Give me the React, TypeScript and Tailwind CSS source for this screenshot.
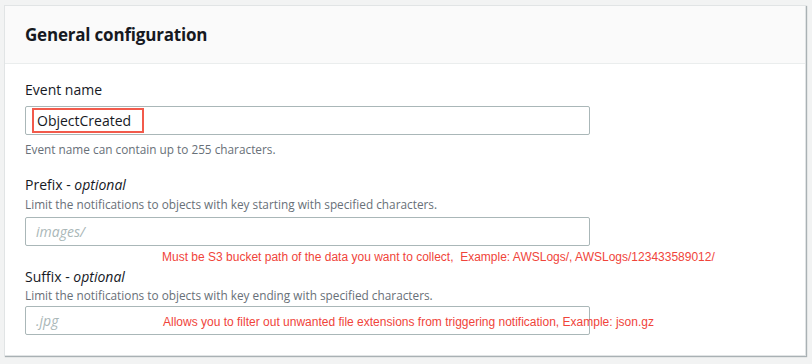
import React from "react";

const ui = { fontFamily: '"Open Sans", "Noto Sans", sans-serif' };
const red = { fontFamily: '"Liberation Sans", Arial, sans-serif' };

export default function App() {
  return (
    <div className="w-[812px] h-[364px] bg-[#f2f3f3] pt-[5px] pl-[4px] pr-[6px]" style={ui}>
      <div className="w-[802px] h-[351px] bg-white border border-[#e1e4e5] shadow-[1px_1px_1px_0_rgba(0,28,36,0.3)] flex flex-col">
        <div className="h-[58px] bg-[#fafafa] border-b border-[#eaeded] flex items-center px-[20px]">
          <h2 className="text-[17px] font-bold text-[#16191f] leading-none tracking-[-0.2px]">General configuration</h2>
        </div>
        <div className="px-[20px] pt-[15px] flex flex-col">
          <label className="text-[14px] text-[#16191f] leading-[22px]">Event name</label>
          <div className="mt-[5px] w-[565px] h-[29px] border border-[#aab7b8] rounded-[2px] flex items-center pl-[6px]">
            <div className="h-[25px] border-2 border-[#f25a4b] flex items-center pl-[3px] pr-[11px]">
              <span className="text-[14px] text-[#16191f]">ObjectCreated</span>
            </div>
          </div>
          <p className="mt-[6px] text-[11.8px] text-[#687078] leading-[16px]">Event name can contain up to 255 characters.</p>

          <label className="mt-[17px] text-[14px] text-[#16191f] leading-[22px]">
            Prefix - <i>optional</i>
          </label>
          <p className="text-[11.8px] text-[#687078] leading-[16px]">Limit the notifications to objects with key starting with specified characters.</p>
          <div className="mt-[5px] w-[565px] h-[29px] border border-[#aab7b8] rounded-[2px] flex items-center pl-[10px]">
            <span className="text-[14px] italic text-[#aab7b8]">images/</span>
          </div>
          <div className="h-[21px] pl-[137px] flex items-center">
            <span className="text-[12px] text-[#f0443a]" style={red}>
              Must be S3 bucket path of the data you want to collect,&nbsp; Example: AWSLogs/, AWSLogs/123433589012/
            </span>
          </div>
          <label className="text-[14px] text-[#16191f] leading-[20px]">
            Suffix - <i>optional</i>
          </label>
          <p className="text-[11.8px] text-[#687078] leading-[16px]">Limit the notifications to objects with key ending with specified characters.</p>
          <div className="mt-[3px] w-[565px] h-[29px] border border-[#aab7b8] rounded-[2px] flex items-center pl-[10px] relative">
            <span className="text-[14px] italic text-[#aab7b8]">.jpg</span>
            <span className="absolute left-[137px] top-[6px] whitespace-nowrap text-[12px] text-[#f0443a]" style={red}>
              Allows you to filter out unwanted file extensions from triggering notification, Example: json.gz
            </span>
          </div>
        </div>
      </div>
    </div>
  );
}
